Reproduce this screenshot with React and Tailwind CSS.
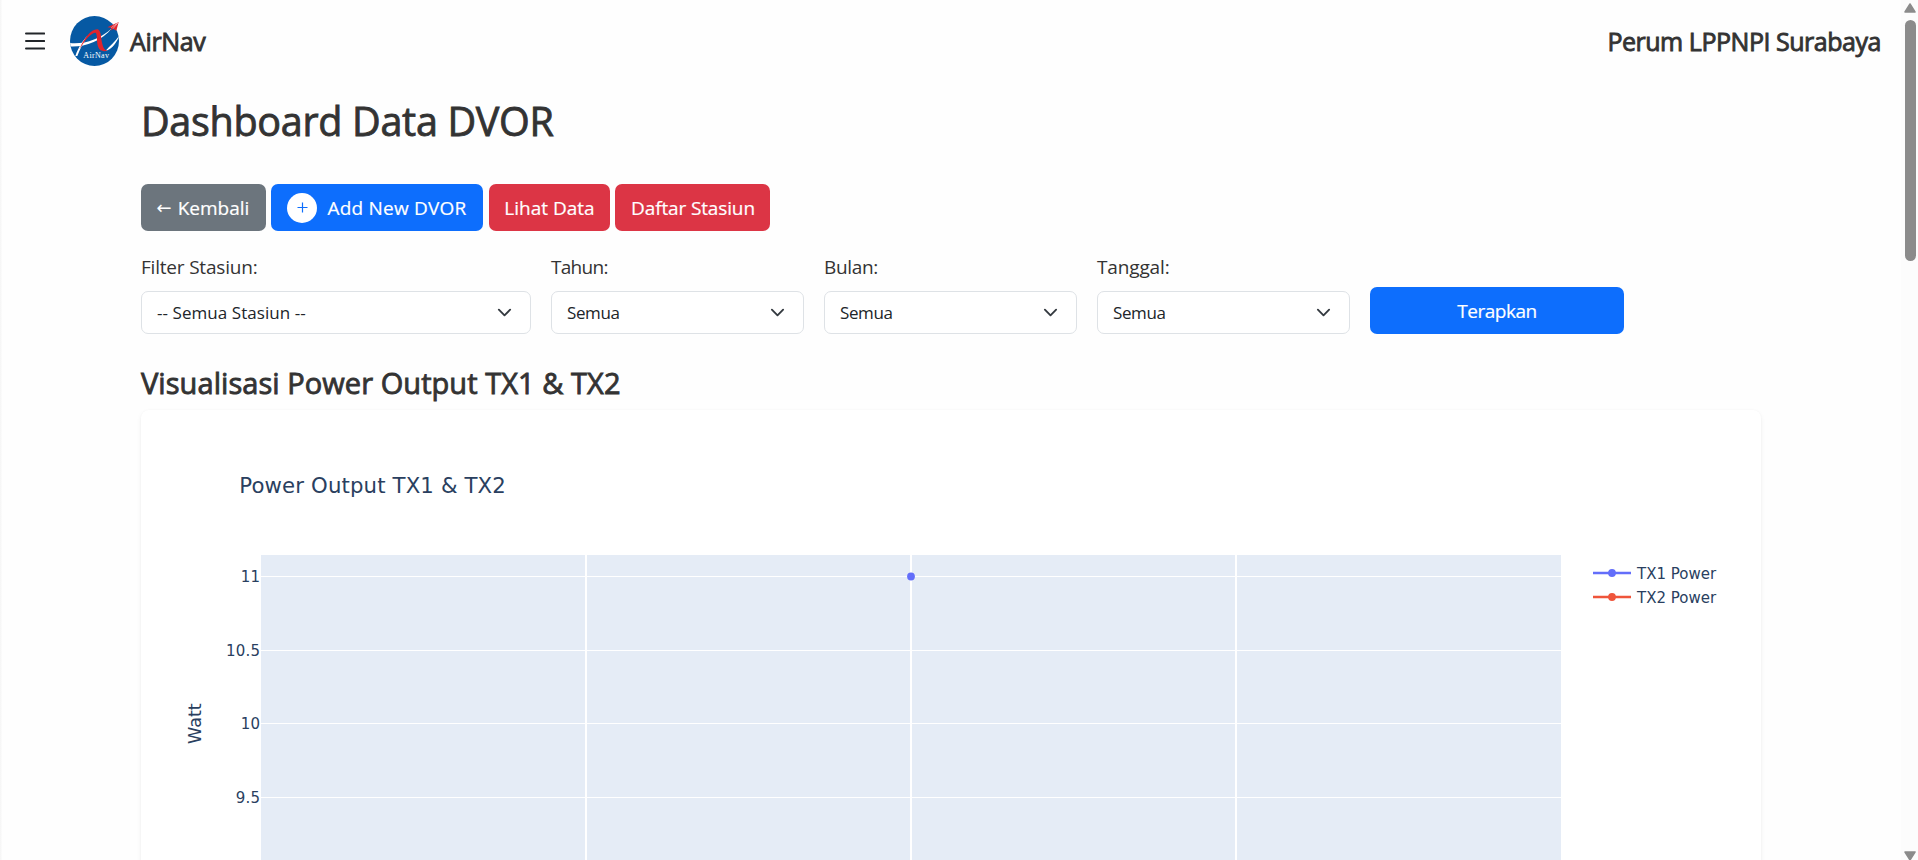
import React from "react";

const heading = "font-medium text-[#333333] [-webkit-text-stroke:0.85px_#333333] whitespace-nowrap";

function Logo() {
  return (
    <svg className="w-[49px] h-[50px] shrink-0" viewBox="210 48 147 150">
      <defs>
        <clipPath id="disc">
          <ellipse cx="283.5" cy="123" rx="73.5" ry="75" />
        </clipPath>
      </defs>
      <ellipse cx="283.5" cy="123" rx="73.5" ry="75" fill="#0659a3" />
      <g clipPath="url(#disc)">
        <path d="M208 129 C250 134 298 120 336 84 C304 126 250 142 208 139 Z" fill="#fff" />
        <path d="M226 168 C236 140 250 120 262 108 C250 128 240 146 232 168 Z" fill="#fff" />
        <path d="M360 104 C348 132 334 148 317 152 C330 138 346 124 360 104 Z" fill="#fff" />
      </g>
      <path d="M238 148 C252 116 272 88 292 88 C304 90 302 112 307 132 C310 146 315 152 323 151 C313 156 299 154 295 142 C289 126 293 104 287 98 C272 98 254 122 238 148 Z" fill="#e0242c" />
      <path d="M322 82 L356 66 L349 92 L339 86 L332 92 L334 83 Z" fill="#e0242c" />
      <path d="M334 83 L354 68 L339 86" fill="none" stroke="#fff" strokeWidth="1.5" />
      <text x="250" y="174" fontSize="24" textLength="77" fill="#fff" fontFamily="Liberation Serif, serif">AirNav</text>
    </svg>
  );
}

function Header() {
  return (
    <header className="flex h-[82px] items-center justify-between pl-[25px] pr-5">
      <div className="flex items-center">
        <svg className="mr-[25px] w-5 h-[18px]" viewBox="0 0 20 18" stroke="#212529" strokeWidth="2" strokeLinecap="round">
          <path d="M1 1.5h18.2M1 9h18.2M1 16.5h18.2" />
        </svg>
        <Logo />
        <span className={`${heading} ml-[11px] text-[25px] leading-[38px] tracking-[-0.35px]`}>AirNav</span>
      </div>
      <span className={`${heading} text-[25px] leading-[38px] tracking-[-0.47px]`}>Perum LPPNPI Surabaya</span>
    </header>
  );
}

function Select({ label, labelClass, value, valueClass }) {
  return (
    <div className="flex flex-col">
      <label className={`mb-[9px] h-[30px] whitespace-nowrap text-[19px] leading-[30px] text-[#333333] ${labelClass}`}>{label}</label>
      <div className="flex h-[43px] items-center justify-between rounded-[7px] border border-[#dee2e6] bg-white pl-[15px] pr-[18px]">
        <span className={`whitespace-nowrap text-[17px] leading-6 text-[#212529] ${valueClass}`}>{value}</span>
        <svg className="h-[15px] w-[15px]" viewBox="0 0 16 16" fill="none" stroke="#343a40" strokeWidth="2" strokeLinecap="round" strokeLinejoin="round">
          <path d="m2 5 6 6 6-6" />
        </svg>
      </div>
    </div>
  );
}

const button = "flex h-[47px] items-center justify-center whitespace-nowrap rounded-[7px] text-[19px] leading-[30px] text-white [-webkit-text-stroke:0.2px_#ffffff]";
const gridY = [
  [21.5, "11"],
  [95.5, "10.5"],
  [168.5, "10"],
  [242.5, "9.5"],
];

function Chart() {
  return (
    <svg className="block h-[560px] w-[1620px]" viewBox="0 0 1620 560" fontFamily="DejaVu Sans, Verdana, sans-serif" fill="#2a3f5f">
      <text x="98.3" y="83" fontSize="21.25" letterSpacing="0.13">Power Output TX1 &amp; TX2</text>
      <rect x="120" y="145" width="1300" height="415" fill="#e5ecf6" />
      <g transform="translate(0 145)">
        {gridY.map(([y, t]) => (
          <g key={t}>
            <path d={`M120 ${y}H1420`} stroke="#fff" strokeWidth="1" />
            <text x="119.3" y={y + 5.5} fontSize="15" letterSpacing="0.2" textAnchor="end">{t}</text>
          </g>
        ))}
      </g>
      <path d="M445 145V560M770 145V560M1095 145V560" stroke="#fff" strokeWidth="2" />
      <circle cx="770" cy="166.5" r="3.9" fill="#636efa" />
      <text transform="translate(60 334) rotate(-90)" fontSize="17.5">Watt</text>
      <g fontSize="15" letterSpacing="0">
        <path d="M1452 163H1490" stroke="#636efa" strokeWidth="2.4" />
        <circle cx="1471" cy="163" r="3.9" fill="#636efa" />
        <text x="1496" y="169">TX1 Power</text>
        <path d="M1452 187H1490" stroke="#ef553b" strokeWidth="2.4" />
        <circle cx="1471" cy="187" r="3.9" fill="#ef553b" />
        <text x="1496" y="193">TX2 Power</text>
      </g>
    </svg>
  );
}

export default function App() {
  return (
    <div className="flex h-[860px] overflow-hidden bg-[#fefefe] font-['Open_Sans',sans-serif]">
      <div className="w-[2px] shrink-0 bg-gradient-to-r from-[#f5f5f5] to-[#fcfcfc]" />
      <div className="-ml-[2px] flex-1">
        <Header />
        <main className="ml-[141px] w-[1620px]">
          <h1 className={`${heading} mt-[15px] text-[39.5px] leading-[48px] tracking-[-0.3px]`}>Dashboard Data DVOR</h1>
          <div className="mt-[39px] flex">
            <button className={`${button} mr-[5px] w-[125px] bg-[#6c757d] pr-px`}>
              <span className="mr-[6px] text-[18px] font-['DejaVu_Sans'] [-webkit-text-stroke:0]">←</span>Kembali
            </button>
            <button className={`${button} mr-[6px] w-[212px] bg-[#0d6efd] tracking-[0.22px]`}>
              <span className="mr-[10px] flex h-[30px] w-[30px] items-center justify-center rounded-full bg-white">
                <svg className="h-[11px] w-[11px]" viewBox="0 0 11 11" stroke="#0d6efd" strokeWidth="1.2">
                  <path d="M5.5 .5v10M.5 5.5h10" />
                </svg>
              </span>
              Add New DVOR
            </button>
            <button className={`${button} mr-[5px] w-[121px] bg-[#dc3545]`}>Lihat Data</button>
            <button className={`${button} w-[155px] bg-[#dc3545] pl-px tracking-[-0.13px]`}>Daftar Stasiun</button>
          </div>
          <div className="mt-[21px] grid grid-cols-[390px_253px_253px_253px_254px] items-end gap-x-5">
            <Select label="Filter Stasiun:" labelClass="tracking-[-0.2px]" value="-- Semua Stasiun --" valueClass="tracking-[0.06px]" />
            <Select label="Tahun:" labelClass="tracking-[-0.7px]" value="Semua" valueClass="tracking-[-0.4px]" />
            <Select label="Bulan:" labelClass="tracking-[-0.35px]" value="Semua" valueClass="tracking-[-0.4px]" />
            <Select label="Tanggal:" labelClass="tracking-[-0.14px]" value="Semua" valueClass="tracking-[-0.4px]" />
            <button className={`${button} bg-[#0d6efd] tracking-[-0.5px]`}>Terapkan</button>
          </div>
          <h2 className={`${heading} mt-[31px] text-[29px] leading-[36px] tracking-[0.06px]`}>Visualisasi Power Output TX1 &amp; TX2</h2>
          <section className="mt-[9px] rounded-[8px] bg-white shadow-[0_2px_5px_rgba(0,0,0,0.06),0_0_2px_rgba(0,0,0,0.03)]">
            <Chart />
          </section>
        </main>
      </div>
      <div className="flex w-[17px] shrink-0 flex-col items-center bg-[#fcfcfc] pl-[1px] pt-[3px]">
        <svg className="h-[10px] w-3" viewBox="0 0 12 10" fill="#8b8b8b" stroke="#8b8b8b" strokeWidth="1.5" strokeLinejoin="round">
          <path d="M6 1 11 9H1Z" />
        </svg>
        <div className="mt-[7px] h-[241px] w-[11px] rounded-full bg-[#8b8b8b]" />
        <svg className="mt-auto h-[9px] w-3" viewBox="0 0 12 9" fill="#8b8b8b" stroke="#8b8b8b" strokeWidth="1.5" strokeLinejoin="round">
          <path d="M6 9 11 1H1Z" />
        </svg>
      </div>
    </div>
  );
}
